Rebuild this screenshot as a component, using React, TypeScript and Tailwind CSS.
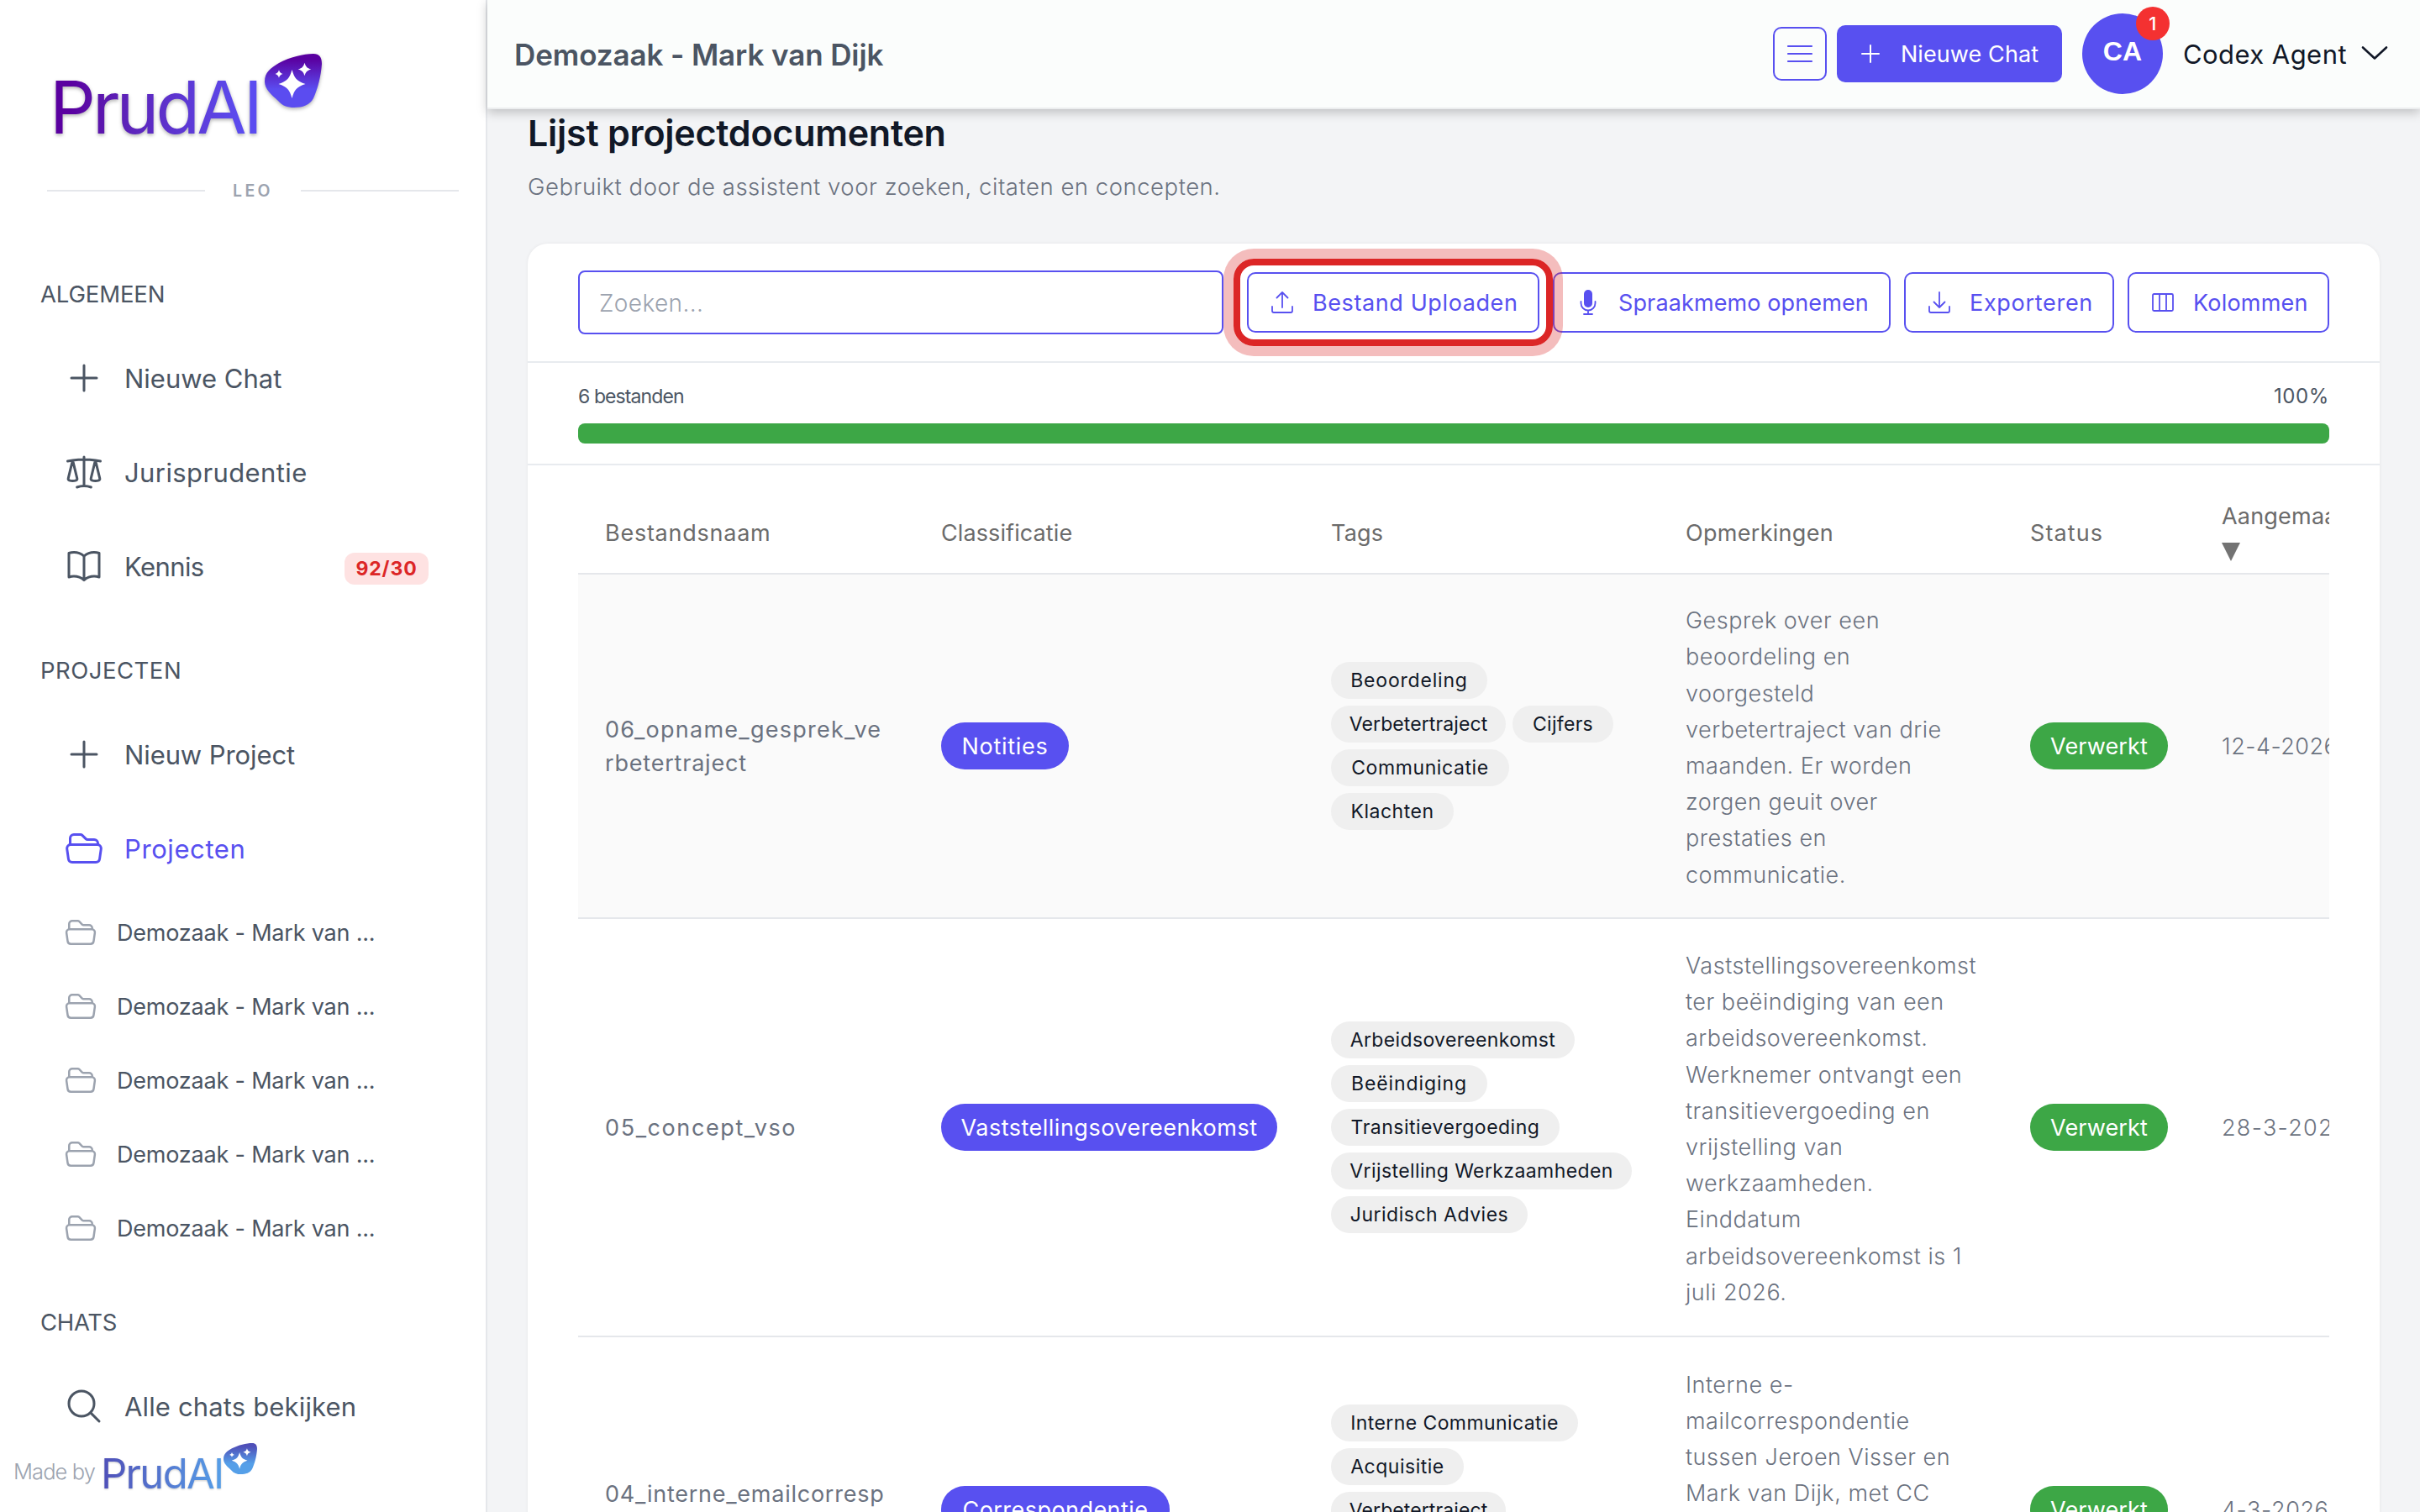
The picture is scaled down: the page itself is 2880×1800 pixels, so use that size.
import React from "react";

const INK = "text-[#4b5563]";

function Star({ x, y, rx, ry }: { x: number; y: number; rx: number; ry: number }) {
  const d = `M${x} ${y - ry} C${x + rx * 0.18} ${y - ry * 0.4} ${x + rx * 0.35} ${y - ry * 0.2} ${x + rx} ${y} C${x + rx * 0.35} ${y + ry * 0.2} ${x + rx * 0.18} ${y + ry * 0.4} ${x} ${y + ry} C${x - rx * 0.18} ${y + ry * 0.4} ${x - rx * 0.35} ${y + ry * 0.2} ${x - rx} ${y} C${x - rx * 0.35} ${y - ry * 0.2} ${x - rx * 0.18} ${y - ry * 0.4} ${x} ${y - ry}Z`;
  return <path d={d} fill="#fff" />;
}

function Blob({ id, from, to, className }: { id: string; from: string; to: string; className: string }) {
  return (
    <svg viewBox="0 0 68 64" className={className} preserveAspectRatio="none">
      <defs>
        <linearGradient id={id} x1="0" y1="0" x2="0" y2="1">
          <stop offset="0.1" stopColor={from} />
          <stop offset="0.66" stopColor={to} />
        </linearGradient>
      </defs>
      <path
        d="M58 0 C65 0 68 4 68 12 C67 27 63 42 58 53 C54 61 45 64 35 64 C27 64 21 62 16 56 C8 49 0 42 0 33 C0 22 7 17 17 11 C30 4 46 0 58 0Z"
        fill={`url(#${id})`}
      />
      <Star x={32.5} y={36} rx={16} ry={17} />
      <Star x={47.5} y={18.5} rx={7.8} ry={7.8} />
      <Star x={17} y={24} rx={4.8} ry={4.8} />
    </svg>
  );
}

function PlusIcon({ className }: { className: string }) {
  return (
    <svg viewBox="0 0 24 24" className={className} fill="none" stroke="currentColor" strokeWidth="1.5" strokeLinecap="round">
      <path d="M12 4.5v15m7.5-7.5h-15" />
    </svg>
  );
}

function FolderIcon({ className }: { className: string }) {
  return (
    <svg viewBox="0 0 24 24" className={className} fill="none" stroke="currentColor" strokeWidth="1.5" strokeLinecap="round" strokeLinejoin="round">
      <path d="M3.75 9.776q.168-.026.344-.026h15.812q.176 0 .344.026m-16.5 0a2.25 2.25 0 0 0-1.883 2.542l.857 6a2.25 2.25 0 0 0 2.227 1.932H19.05a2.25 2.25 0 0 0 2.227-1.932l.857-6a2.25 2.25 0 0 0-1.883-2.542m-16.5 0V6A2.25 2.25 0 0 1 6 3.75h3.879a1.5 1.5 0 0 1 1.06.44l2.122 2.12a1.5 1.5 0 0 0 1.06.44H18A2.25 2.25 0 0 1 20.25 9v.776" />
    </svg>
  );
}

function ScaleIcon() {
  return (
    <svg viewBox="0 0 24 24" className="size-12" fill="none" stroke="currentColor" strokeWidth="1.5" strokeLinecap="round" strokeLinejoin="round">
      <path d="M12 3v17.25m0 0c-1.472 0-2.882.265-4.185.75M12 20.25c1.472 0 2.882.265 4.185.75M18.75 4.97A48.416 48.416 0 0 0 12 4.5c-2.291 0-4.545.16-6.75.47m13.5 0c1.01.143 2.01.317 3 .52m-3-.52 2.62 10.726c.122.499-.106 1.028-.589 1.202a5.988 5.988 0 0 1-2.031.352 5.988 5.988 0 0 1-2.031-.352c-.483-.174-.711-.703-.59-1.202L18.75 4.971Zm-16.5.52c.99-.203 1.99-.377 3-.52m0 0 2.62 10.726c.122.499-.106 1.028-.589 1.202a5.989 5.989 0 0 1-2.031.352 5.989 5.989 0 0 1-2.031-.352c-.483-.174-.711-.703-.59-1.202L5.25 4.971Z" />
    </svg>
  );
}

function BookIcon() {
  return (
    <svg viewBox="0 0 24 24" className="size-12" fill="none" stroke="currentColor" strokeWidth="1.5" strokeLinecap="round" strokeLinejoin="round">
      <path d="M12 6.042A8.967 8.967 0 0 0 6 3.75c-1.052 0-2.062.18-3 .512v14.25A8.987 8.987 0 0 1 6 18c2.305 0 4.408.867 6 2.292m0-14.25a8.966 8.966 0 0 1 6-2.292c1.052 0 2.062.18 3 .512v14.25A8.987 8.987 0 0 0 18 18a8.967 8.967 0 0 0-6 2.292m0-14.25v14.25" />
    </svg>
  );
}

function SearchIcon() {
  return (
    <svg viewBox="0 0 24 24" className="size-12" fill="none" stroke="currentColor" strokeWidth="1.5" strokeLinecap="round" strokeLinejoin="round">
      <path d="m21 21-5.197-5.197m0 0A7.5 7.5 0 1 0 5.196 5.196a7.5 7.5 0 0 0 10.607 10.607Z" />
    </svg>
  );
}

function UploadIcon() {
  return (
    <svg viewBox="0 0 28 28" className="size-7" fill="none" stroke="currentColor" strokeWidth="1.8" strokeLinecap="round" strokeLinejoin="round">
      <path d="M14 20V2M7.500 8.500 14 2l6.500 6.500M2 19v5a2 2 0 0 0 2 2h20a2 2 0 0 0 2-2v-5" />
    </svg>
  );
}

function DownloadIcon() {
  return (
    <svg viewBox="0 0 28 28" className="size-7" fill="none" stroke="currentColor" strokeWidth="1.8" strokeLinecap="round" strokeLinejoin="round">
      <path d="M14 2v18M7.500 13.500 14 20l6.500-6.500M2 19v5a2 2 0 0 0 2 2h20a2 2 0 0 0 2-2v-5" />
    </svg>
  );
}

function MicIcon() {
  return (
    <svg viewBox="0 0 28 32" className="h-8 w-7" fill="none" stroke="currentColor" strokeWidth="1.8" strokeLinecap="round">
      <rect x="9" y="1" width="10" height="21" rx="5" fill="currentColor" stroke="none" />
      <path d="M5.500 15v2a8.500 8.500 0 0 0 17 0v-2M14 25.500V30M9 30h10" />
    </svg>
  );
}

function ColumnsIcon() {
  return (
    <svg viewBox="0 0 28 28" className="size-7" fill="none" stroke="currentColor" strokeWidth="1.8" strokeLinejoin="round">
      <rect x="2" y="4" width="24" height="20" rx="1.500" />
      <path d="M10 4v20M18 4v20" />
    </svg>
  );
}

function NavItem({ icon, label, tracking, active, badge }: { icon: React.ReactNode; label: string; tracking: string; active?: boolean; badge?: string }) {
  return (
    <a className={`flex h-28 items-center pl-[76px] pr-[68px] ${active ? "text-[#5850f0]" : INK}`}>
      {icon}
      <span className={`ml-6 pt-px text-[31px] font-normal leading-none ${tracking}`}>{label}</span>
      {badge && (
        <span className="ml-auto mt-[5px] flex h-[38px] w-[100px] items-center justify-center rounded-xl bg-[#fee2e2] pt-px text-[23px] font-bold tracking-[0.9px] text-[#dc2626]">
          {badge}
        </span>
      )}
    </a>
  );
}

function Section({ children, tracking }: { children: React.ReactNode; tracking: string }) {
  return <h2 className={`pl-12 text-[27.5px] leading-8 ${INK} ${tracking}`}>{children}</h2>;
}

function Sidebar() {
  return (
    <aside className="flex h-full w-[580px] shrink-0 flex-col border-r-2 border-[#e5e7eb] bg-white">
      <div className="flex h-[200px] shrink-0 items-start pl-[59px] pt-16">
        <span className="w-[256px] whitespace-nowrap bg-gradient-to-r from-[#5a00a0] from-10% to-[#5b4cf0] to-90% bg-clip-text pt-[12px] text-[86px] leading-[104px] tracking-[-3.9px] text-transparent drop-shadow-[0_2px_2px_rgba(0,0,0,0.3)]">
          PrudAI
        </span>
        <Blob id="brand" from="#5a00a0" to="#5b4cf0" className="h-16 w-[68px] drop-shadow-[0_2px_2px_rgba(0,0,0,0.3)]" />
      </div>
      <div className="flex h-[54px] shrink-0 items-center justify-between px-14 pr-8">
        <span className="h-0.5 w-[188px] bg-[#e5e7eb]" />
        <span className="pt-0.5 text-[19.5px] font-semibold tracking-[3.4px] text-[#9ca3af]">LEO</span>
        <span className="h-0.5 w-[188px] bg-[#e5e7eb]" />
      </div>
      <nav className="flex flex-col pt-20">
        <Section tracking="tracking-[-0.15px]">ALGEMEEN</Section>
        <div className="pt-7">
          <NavItem icon={<PlusIcon className="size-12" />} label="Nieuwe Chat" tracking="tracking-[0px]" />
          <NavItem icon={<ScaleIcon />} label="Jurisprudentie" tracking="tracking-[0.4px]" />
          <NavItem icon={<BookIcon />} label="Kennis" tracking="tracking-[-0.6px]" badge="92/30" />
        </div>
        <div className="pt-[52px]">
          <Section tracking="tracking-[0.5px]">PROJECTEN</Section>
        </div>
        <div className="pt-7">
          <NavItem icon={<PlusIcon className="size-12" />} label="Nieuw Project" tracking="tracking-[-0.1px]" />
          <NavItem icon={<FolderIcon className="size-12" />} label="Projecten" tracking="tracking-[0.6px]" active />
        </div>
        <div>
          {[0, 1, 2, 3, 4].map((i) => (
            <a key={i} className={`flex h-[88px] items-center pl-[76px] ${INK}`}>
              <FolderIcon className="size-10 text-[#9ca3af]" />
              <span className="ml-[23px] pt-0.5 text-[27px] tracking-[-0.2px]">Demozaak - Mark van ...</span>
            </a>
          ))}
        </div>
        <div className="pt-[52px]">
          <Section tracking="tracking-[-0.3px]">CHATS</Section>
        </div>
        <div className="pt-7">
          <NavItem icon={<SearchIcon />} label="Alle chats bekijken" tracking="tracking-[0.15px]" />
        </div>
      </nav>
      <footer className="-mt-4 flex items-start pl-4">
        <span className="pt-[22px] text-[25.5px] font-light leading-8 tracking-[-0.9px] text-[#9ca3af]">Made by</span>
        <span className="ml-[7px] w-[146px] whitespace-nowrap bg-gradient-to-r from-[#4f4fb8] to-[#559fe8] bg-clip-text pt-[13px] text-[49px] leading-[56px] tracking-[-1.7px] text-transparent drop-shadow-[0_1px_1px_rgba(0,0,0,0.2)]">
          PrudAI
        </span>
        <Blob id="brand-small" from="#4f4fb8" to="#559fe8" className="mt-1 h-[37px] w-10" />
      </footer>
    </aside>
  );
}

function Header() {
  return (
    <header className="relative z-10 flex h-[130px] shrink-0 items-center border-b-2 border-[#eceeef] bg-[#fbfdfc] pl-8 pr-[38px] shadow-[0_4px_12px_rgba(0,0,0,0.22)]">
      <h1 className={`pt-0.5 text-[35px] font-semibold ${INK} tracking-[-0.1px]`}>Demozaak - Mark van Dijk</h1>
      <button className="ml-auto flex size-16 items-center justify-center rounded-[10px] border-2 border-[#5850f0] text-[#5850f0]">
        <svg viewBox="0 0 32 22" className="h-[22px] w-8" stroke="currentColor" strokeWidth="2.2" strokeLinecap="round">
          <path d="M2 2h28M2 11h28M2 20h28" />
        </svg>
      </button>
      <button className="ml-3 flex h-[68px] w-[268px] items-center rounded-[10px] bg-[#5850f0] pl-6 text-white">
        <PlusIcon className="size-8" />
        <span className="ml-5 pt-0.5 text-[27px] tracking-[0.1px]">Nieuwe Chat</span>
      </button>
      <div className="relative ml-6 flex size-24 items-center justify-center rounded-full bg-[#5850f0] pb-1.5 font-['Liberation_Sans',sans-serif] text-[32px] font-bold text-white">
        CA
        <span className="absolute -right-2 -top-2 flex size-10 items-center justify-center rounded-full bg-[#f43131] font-['Inter',sans-serif] text-[22px] font-medium">1</span>
      </div>
      <span className="ml-6 pt-0.5 text-[31px] tracking-[0.45px] text-[#111827]">Codex Agent</span>
      <svg viewBox="0 0 32 18" className="ml-[17px] mt-[-2px] h-[18px] w-8" fill="none" stroke="#111827" strokeWidth="2.6" strokeLinecap="round" strokeLinejoin="round">
        <path d="M2 2.500 16 15.500 30 2.500" />
      </svg>
    </header>
  );
}

function ToolButton({ icon, label, box, text }: { icon: React.ReactNode; label: string; box: string; text: string }) {
  return (
    <button className={`flex h-[72px] shrink-0 items-center rounded-[10px] border-2 border-[#5850f0] pl-[26px] text-[#5850f0] ${box}`}>
      {icon}
      <span className={`ml-[22px] whitespace-nowrap pt-0.5 text-[27px] ${text}`}>{label}</span>
    </button>
  );
}

type Row = {
  name: { line: string; style: string }[];
  kind: string;
  kindStyle: string;
  tags: { label: string; style: string }[];
  notes: string[];
  date: string;
  dateStyle: string;
  style: string;
};

const rows: Row[] = [
  {
    name: [
      { line: "06_opname_gesprek_ve", style: "tracking-[1.25px]" },
      { line: "rbetertraject", style: "tracking-[0.8px]" },
    ],
    kind: "Notities",
    kindStyle: "w-[152px] tracking-[0.7px]",
    tags: [
      { label: "Beoordeling", style: "w-[186px] tracking-[0.8px]" },
      { label: "Verbetertraject", style: "w-[208px] tracking-[0.1px]" },
      { label: "Cijfers", style: "w-[120px] tracking-[0.3px]" },
      { label: "Communicatie", style: "w-[212px] tracking-[0.6px]" },
      { label: "Klachten", style: "w-[146px] tracking-[0.5px]" },
    ],
    notes: ["Gesprek over een", "beoordeling en", "voorgesteld", "verbetertraject van drie", "maanden. Er worden", "zorgen geuit over", "prestaties en", "communicatie."],
    date: "12-4-2026",
    dateStyle: "tracking-[0.5px]",
    style: "h-[410px] bg-[#fafafa]",
  },
  {
    name: [{ line: "05_concept_vso", style: "tracking-[1.6px]" }],
    kind: "Vaststellingsovereenkomst",
    kindStyle: "w-[400px] tracking-[0.5px]",
    tags: [
      { label: "Arbeidsovereenkomst", style: "w-[290px] tracking-[0.35px]" },
      { label: "Beëindiging", style: "w-[186px] tracking-[0.9px]" },
      { label: "Transitievergoeding", style: "w-[272px] tracking-[0.5px]" },
      { label: "Vrijstelling Werkzaamheden", style: "w-[358px] tracking-[0.4px]" },
      { label: "Juridisch Advies", style: "w-[234px] tracking-[0.5px]" },
    ],
    notes: ["Vaststellingsovereenkomst", "ter beëindiging van een", "arbeidsovereenkomst.", "Werknemer ontvangt een", "transitievergoeding en", "vrijstelling van", "werkzaamheden.", "Einddatum", "arbeidsovereenkomst is 1", "juli 2026."],
    date: "28-3-2026",
    dateStyle: "tracking-[1.3px]",
    style: "h-[498px]",
  },
  {
    name: [{ line: "04_interne_emailcorresp", style: "tracking-[0.75px]" }],
    kind: "Correspondentie",
    kindStyle: "w-[272px] tracking-[0.45px]",
    tags: [
      { label: "Interne Communicatie", style: "w-[294px] tracking-[0.4px]" },
      { label: "Acquisitie", style: "w-[158px] tracking-[0.5px]" },
      { label: "Verbetertraject", style: "w-[208px] tracking-[0.1px]" },
    ],
    notes: ["Interne e-", "mailcorrespondentie", "tussen Jeroen Visser en", "Mark van Dijk, met CC"],
    date: "4-3-2026",
    dateStyle: "tracking-[0.6px]",
    style: "h-[412px]",
  },
];

const GRID = "grid w-[2240px] grid-cols-[400px_464px_422px_410px_228px_316px]";

function TableRow({ row, last }: { row: Row; last: boolean }) {
  return (
    <div className={`${GRID} items-center border-b-2 border-[#e5e7eb] ${row.style}`}>
      <div className={`pl-8 text-[27px] font-normal leading-10 text-[#6b7280] ${last ? "pb-9" : "pt-px"}`}>
        {row.name.map((n) => (
          <p key={n.line} className={n.style}>{n.line}</p>
        ))}
      </div>
      <div className="pl-8">
        <span className={`flex h-14 items-center justify-center whitespace-nowrap rounded-full bg-[#5850f0] pt-0.5 text-[27px] font-normal text-white ${row.kindStyle}`}>{row.kind}</span>
      </div>
      <div className={`flex w-[392px] flex-wrap gap-2 pl-8 ${last ? "pb-[102px]" : ""}`}>
        {row.tags.map((tag) => (
          <span key={tag.label} className={`flex h-11 items-center justify-center whitespace-nowrap rounded-full bg-[#efefef] text-[23px] font-normal text-[#111827] ${tag.style}`}>
            {tag.label}
          </span>
        ))}
      </div>
      <div className={`whitespace-nowrap pl-8 text-[27px] font-light leading-[43.2px] tracking-[0.52px] text-[#6b7280] ${last ? "pb-[168px]" : "pt-1"}`}>
        {row.notes.map((line) => (
          <p key={line}>{line}</p>
        ))}
      </div>
      <div className="pl-8">
        <span className="flex h-14 w-[164px] items-center justify-center rounded-full bg-[#3da746] pt-0.5 text-[27px] font-normal tracking-[0.1px] text-white">Verwerkt</span>
      </div>
      <div className={`pl-8 pt-0.5 text-[27px] font-light text-[#6b7280] ${row.dateStyle}`}>{row.date}</div>
    </div>
  );
}

export default function App() {
  return (
    <div className="flex h-[1800px] w-[2880px] overflow-hidden bg-[#f3f4f6] font-['Inter',sans-serif]">
      <Sidebar />
      <main className="flex min-w-0 flex-1 flex-col">
        <Header />
        <div className="flex flex-col pl-12">
          <h2 className="text-[43px] font-semibold leading-[56px] tracking-[-0.25px] text-[#111827]">Lijst projectdocumenten</h2>
          <p className="pt-4 text-[27.5px] font-light leading-10 tracking-[0.52px] text-[#6b7280]">Gebruikt door de assistent voor zoeken, citaten en concepten.</p>
          <section className="mt-12 h-[1600px] w-[2204px] overflow-hidden rounded-t-3xl bg-white shadow-[0_0_4px_rgba(0,0,0,0.06)]">
            <div className="flex h-[142px] items-center border-b-2 border-[#e8ebef] px-[60px]">
              <div className="flex h-[76px] w-[768px] items-center rounded-lg border-2 border-[#5850f0] pl-[23px] pt-0.5 text-[28px] font-light tracking-[0.4px] text-[#9ca3af]">Zoeken...</div>
              <div className="relative ml-7">
                <ToolButton icon={<UploadIcon />} label="Bestand Uploaden" box="w-[348px]" text="tracking-[0.6px]" />
                <span className="absolute -inset-4 z-10 rounded-3xl border-8 border-[#dc2626] shadow-[0_0_0_12px_rgba(220,38,38,0.3)]" />
              </div>
              <div className="ml-4 flex gap-4">
                <ToolButton icon={<MicIcon />} label="Spraakmemo opnemen" box="w-[402px]" text="tracking-[0.12px]" />
                <ToolButton icon={<DownloadIcon />} label="Exporteren" box="w-[250px]" text="tracking-[0.7px]" />
                <ToolButton icon={<ColumnsIcon />} label="Kolommen" box="w-[240px]" text="tracking-[0.2px]" />
              </div>
            </div>
            <div className="h-[122px] border-b-2 border-[#e8ebef] px-[60px] pt-6">
              <div className="flex h-8 items-center justify-between text-[23px] text-[#4b5563]">
                <span className="tracking-[-0.9px]">6 bestanden</span>
                <span className="text-[24px] tracking-[0.6px]">100%</span>
              </div>
              <div className="mt-4 h-6 rounded-lg bg-[#3da746]" />
            </div>
            <div className="mx-[60px] overflow-hidden pt-10">
              <div className={`${GRID} h-[90px] items-center border-b-2 border-[#e5e7eb] pb-1.5 text-[27px] font-normal leading-10 text-[#6b6b6b]`}>
                <span className="pl-8 tracking-[0.75px]">Bestandsnaam</span>
                <span className="pl-8 tracking-[0.1px]">Classificatie</span>
                <span className="pl-8 tracking-[0.2px]">Tags</span>
                <span className="pl-8 tracking-[0.3px]">Opmerkingen</span>
                <span className="pl-8 tracking-[1.1px]">Status</span>
                <span className="flex flex-col pl-8">
                  <span className="tracking-[0.2px]">Aangemaakt</span>
                  <span className="flex h-10 items-center pt-1">
                    <svg viewBox="0 0 22 22" className="size-[22px]">
                      <path d="M0 0h22L11 22z" fill="#737373" />
                    </svg>
                  </span>
                </span>
              </div>
              {rows.map((row, i) => (
                <TableRow key={row.date} row={row} last={i === rows.length - 1} />
              ))}
            </div>
          </section>
        </div>
      </main>
    </div>
  );
}
